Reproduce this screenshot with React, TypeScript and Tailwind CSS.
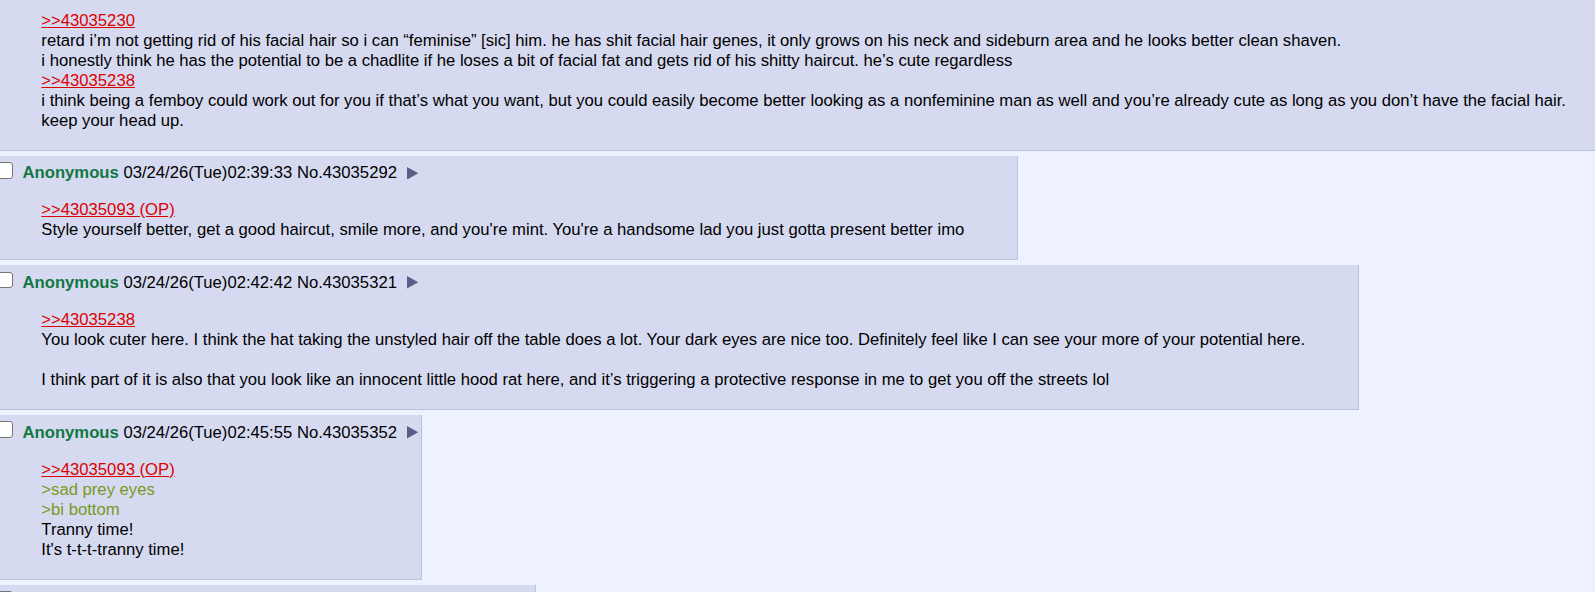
import React from "react";

function Checkbox() {
  return (
    <span className="inline-block align-baseline w-[16.67px] h-[16.67px] mt-[3.75px] ml-[5px] mr-[9.5px] bg-white border border-[#767676] rounded-[3px]" />
  );
}

function MenuArrow() {
  return (
    <svg
      width="11.3"
      height="12.6"
      viewBox="0 0 11.3 12.6"
      className="inline-block ml-[10.3px] align-[-0.7px]"
    >
      <polygon points="0,0 11.3,6.3 0,12.6" fill="#5a5d86" />
    </svg>
  );
}

function Quote({ children }: { children: React.ReactNode }) {
  return <span className="text-[#DD0000] underline">{children}</span>;
}

function Green({ children }: { children: React.ReactNode }) {
  return <span className="text-[#789922]">{children}</span>;
}

function Reply({
  date,
  no,
  children,
}: {
  date: string;
  no: string;
  children: React.ReactNode;
}) {
  return (
    <div className="mt-[5px] w-fit bg-[#D6DAF0] border-b border-r border-[#B7C5D9] p-[2.5px]">
      <div className="whitespace-nowrap">
        <Checkbox />
        <span className="font-bold text-[#117743]">Anonymous</span>
        {" "}
        <span>
          {date} No.{no}
        </span>
        <MenuArrow />
      </div>
      <blockquote className="my-[16.67px] mx-[50px]">{children}</blockquote>
    </div>
  );
}

export default function App() {
  return (
    <div className="h-screen w-screen overflow-hidden bg-[#EEF2FF] text-black text-[16.67px] leading-[20px] font-['Liberation_Sans',Arial,sans-serif]">
      <div className="ml-[-11.17px] w-[1650px]">
        <div className="bg-[#D6DAF0] border-b border-r border-[#B7C5D9] p-[2.5px]">
          <blockquote className="mt-[8px] mb-[16.67px] mx-[50px]">
            <Quote>&gt;&gt;43035230</Quote>
            <br />
            retard i’m not getting rid of his facial hair so i can “feminise” [sic] him. he has shit facial hair genes, it only grows on his neck and sideburn area and he looks better clean shaven.
            <br />
            i honestly think he has the potential to be a chadlite if he loses a bit of facial fat and gets rid of his shitty haircut. he’s cute regardless
            <br />
            <Quote>&gt;&gt;43035238</Quote>
            <br />
            i think being a femboy could work out for you if that’s what you want, but you could easily become better looking as a nonfeminine man as well and you’re already cute as long as you don’t have the facial hair. keep your head up.
          </blockquote>
        </div>

        <Reply date="03/24/26(Tue)02:39:33" no="43035292">
          <Quote>&gt;&gt;43035093 (OP)</Quote>
          <br />
          Style yourself better, get a good haircut, smile more, and you're mint. You're a handsome lad you just gotta present better imo
        </Reply>

        <Reply date="03/24/26(Tue)02:42:42" no="43035321">
          <Quote>&gt;&gt;43035238</Quote>
          <br />
          You look cuter here. I think the hat taking the unstyled hair off the table does a lot. Your dark eyes are nice too. Definitely feel like I can see your more of your potential here.
          <br />
          <br />
          I think part of it is also that you look like an innocent little hood rat here, and it’s triggering a protective response in me to get you off the streets lol
        </Reply>

        <Reply date="03/24/26(Tue)02:45:55" no="43035352">
          <Quote>&gt;&gt;43035093 (OP)</Quote>
          <br />
          <Green>&gt;sad prey eyes</Green>
          <br />
          <Green>&gt;bi bottom</Green>
          <br />
          Tranny time!
          <br />
          It's t-t-t-tranny time!
        </Reply>

        <div className="mt-[5px] w-[547px] h-[100px] bg-[#D6DAF0] border-b border-r border-[#B7C5D9] p-[2.5px]">
          <div>
            <Checkbox />
          </div>
        </div>
      </div>
    </div>
  );
}
